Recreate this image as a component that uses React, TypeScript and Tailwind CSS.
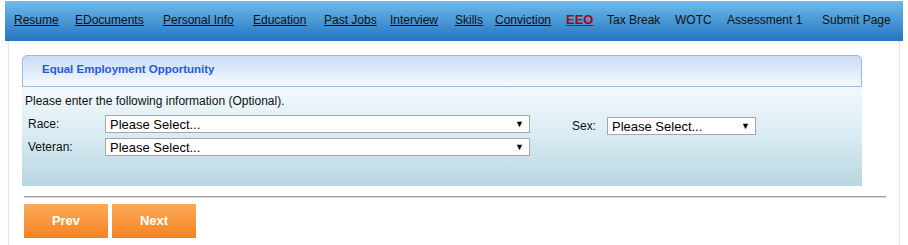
import React from 'react';

const navItems = [
  { label: 'Resume', w: 61, link: true },
  { label: 'EDocuments', w: 88, link: true },
  { label: 'Personal Info', w: 90, link: true },
  { label: 'Education', w: 71, link: true },
  { label: 'Past Jobs', w: 66, link: true },
  { label: 'Interview', w: 65, link: true },
  { label: 'Skills', w: 40, link: true },
  { label: 'Conviction', w: 71, link: true },
  { label: 'EEO', w: 41, link: true, active: true },
  { label: 'Tax Break', w: 68, link: false },
  { label: 'WOTC', w: 52, link: false },
  { label: 'Assessment 1', w: 95, link: false },
  { label: 'Submit Page', w: 80, link: false },
];

function FakeSelect({ width }: { width: string }) {
  return (
    <div
      className={`${width} flex h-[18px] items-center justify-between border border-[#a6a6a6] bg-white pl-[4px] pr-[5px] font-['Liberation_Sans',Arial,sans-serif] text-[13px] leading-none text-black`}
    >
      <span>Please Select...</span>
      <span className="text-[9px]">▼</span>
    </div>
  );
}

export default function App() {
  return (
    <div className="h-[245px] w-[908px] overflow-hidden bg-white font-['Liberation_Sans',Arial,sans-serif]">
      {/* top nav */}
      <div className="mx-[5px] mt-[1px] flex h-[40px] items-center bg-gradient-to-b from-[#6dbbe9] to-[#2474bf] pl-[9px] pb-[3px] text-[12px]">
        {navItems.map(item => (
          <div key={item.label} style={{ width: item.w }} className="shrink-0 whitespace-nowrap">
            {item.active ? (
              <span className="text-[13px] font-bold text-[#b0001a] underline">{item.label}</span>
            ) : (
              <span className={item.link ? 'text-[#111] underline' : 'text-[#111]'}>{item.label}</span>
            )}
          </div>
        ))}
      </div>

      <div className="mx-[8px] h-[204px] border-x border-[#d7e5f5] pt-[14px]">
        {/* panel */}
        <div className="ml-[13px] w-[840px]">
          <div className="flex h-[32px] items-center rounded-t-[5px] border border-[#9ab8e6] bg-gradient-to-b from-[#cbdcf5] to-[#f5f9fe] pl-[19px] pb-[2px] text-[11.5px] font-bold text-[#2459e0]">
            Equal Employment Opportunity
          </div>
          <div className="h-[99px] bg-gradient-to-b from-[#f3f9fc] via-[#d8ebf3] to-[#b9d6e1] pl-[3px] pt-[7px] text-[12px] text-[#111]">
            <div className="leading-[14px]">Please enter the following information (Optional).</div>
            <div className="mt-[7px] flex">
              <div className="w-[505px]">
                <div className="flex items-center">
                  <span className="w-[80px] pl-[3px]">Race:</span>
                  <FakeSelect width="w-[425px]" />
                </div>
                <div className="mt-[5px] flex items-center">
                  <span className="w-[80px] pl-[3px]">Veteran:</span>
                  <FakeSelect width="w-[425px]" />
                </div>
              </div>
              <div className="ml-[42px] mt-[2px] flex h-[18px] items-center">
                <span className="w-[35px]">Sex:</span>
                <FakeSelect width="w-[149px]" />
              </div>
            </div>
          </div>
        </div>

        <div className="ml-[15px] mt-[10px] h-[2px] w-[862px] border-t border-b border-t-[#9c9c9c] border-b-[#dcdcdc]" />

        <div className="ml-[15px] mt-[6px] flex gap-[4px]">
          <button className="h-[34px] w-[84px] bg-gradient-to-b from-[#fbaa55] to-[#f5821f] text-[13px] font-bold text-white">
            Prev
          </button>
          <button className="h-[34px] w-[84px] bg-gradient-to-b from-[#fbaa55] to-[#f5821f] text-[13px] font-bold text-white">
            Next
          </button>
        </div>
      </div>
    </div>
  );
}
